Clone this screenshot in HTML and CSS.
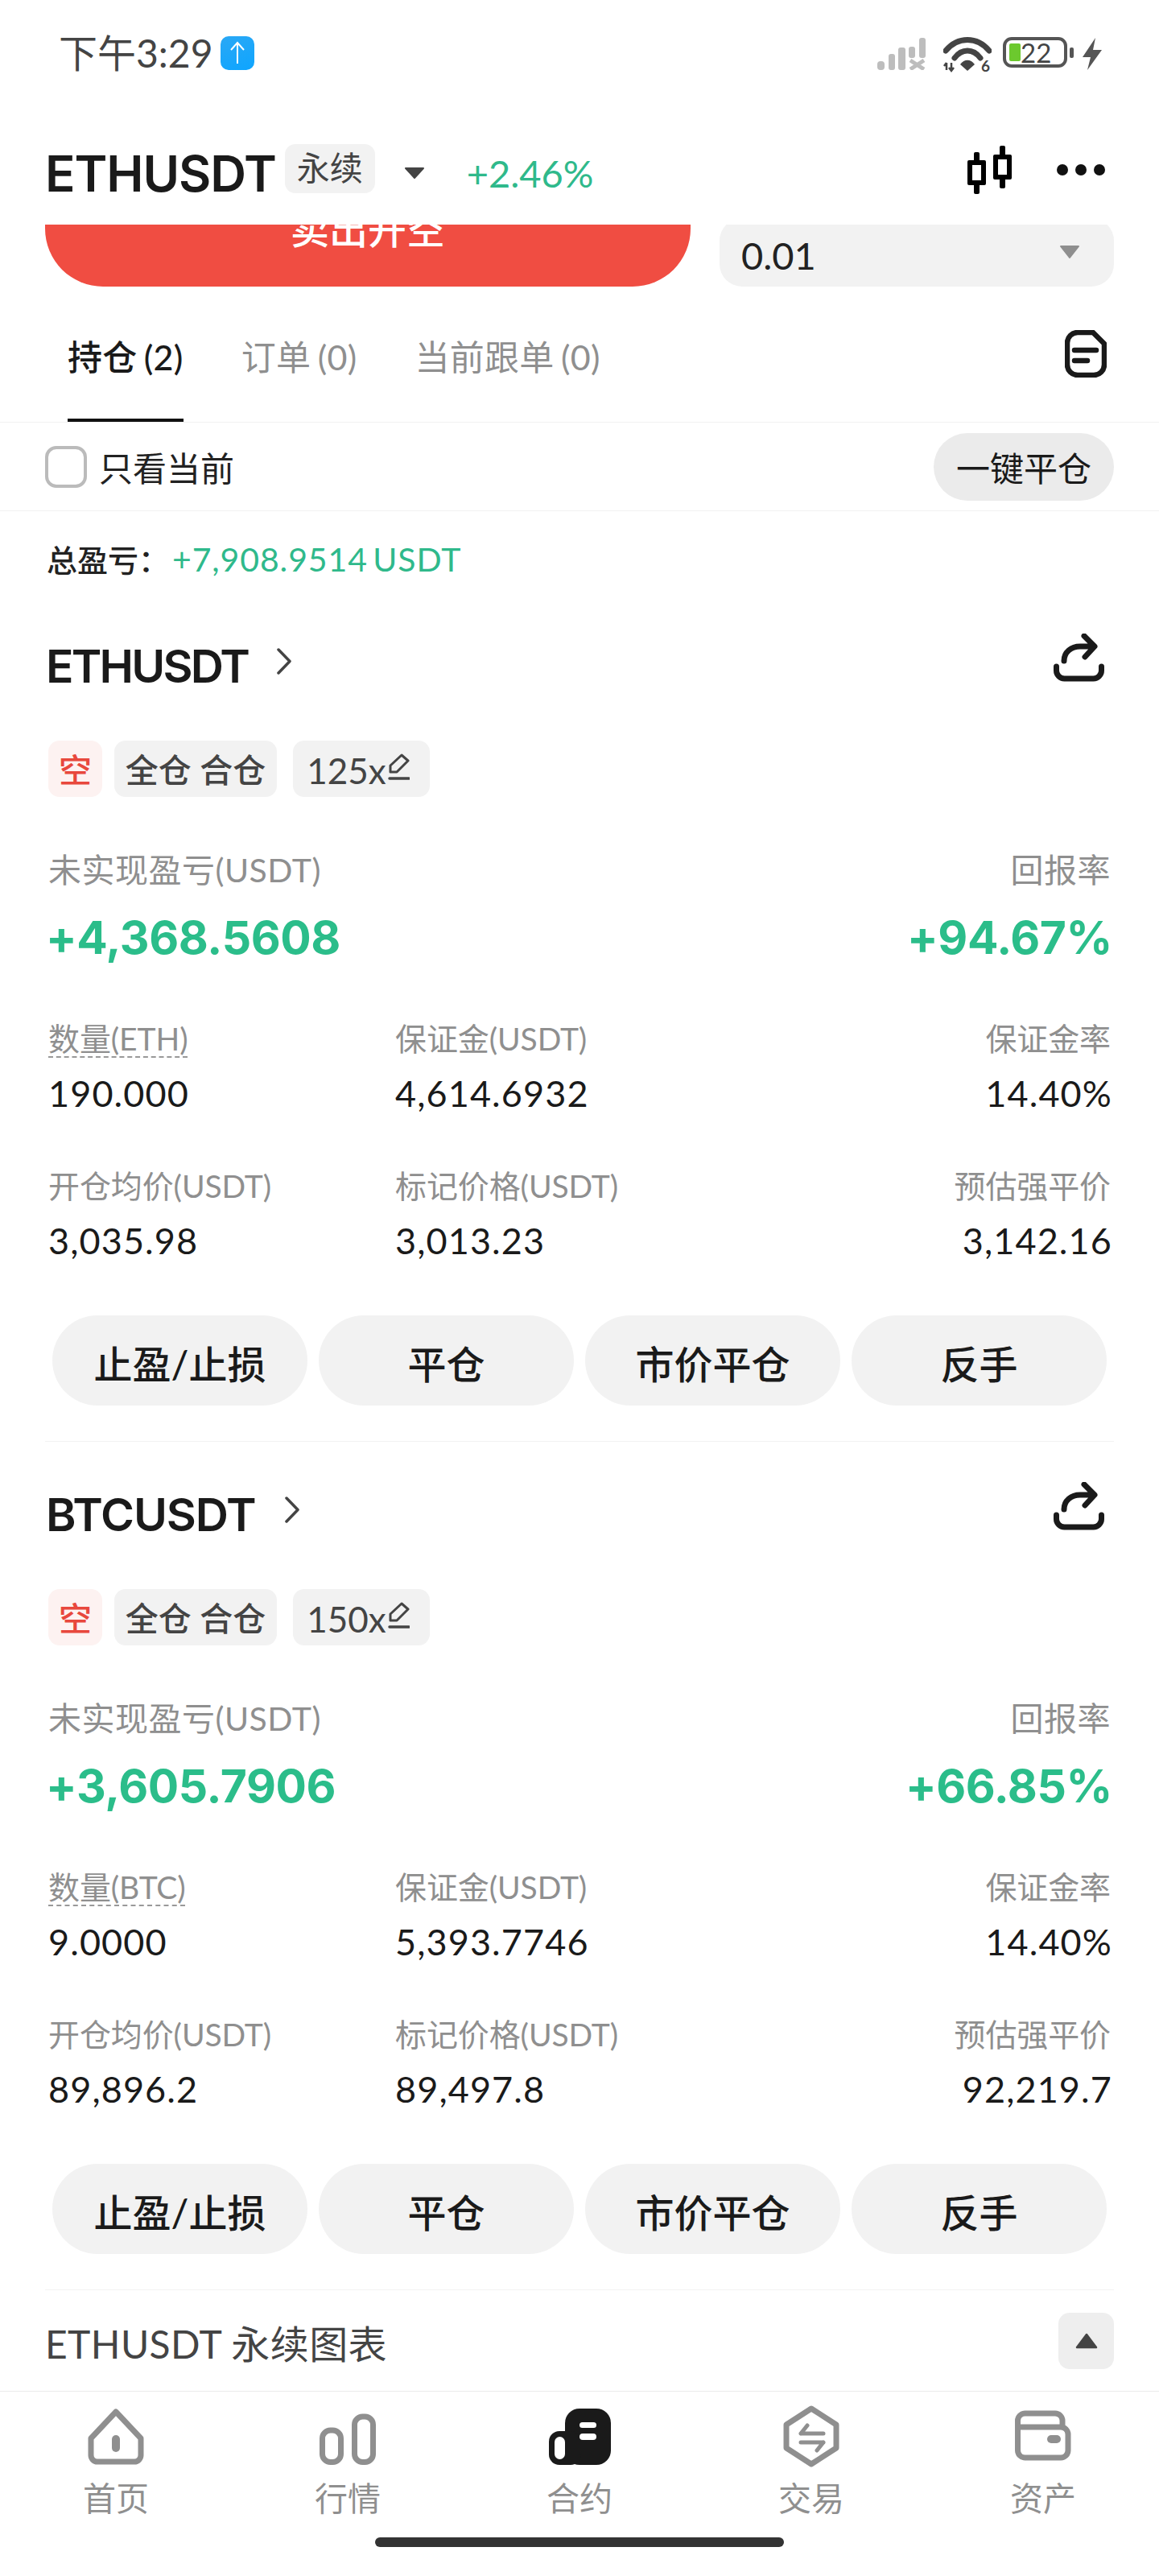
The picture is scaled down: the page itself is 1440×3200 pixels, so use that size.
FILE: index.html
```html
<!DOCTYPE html>
<html lang="zh-CN">
<head>
<meta charset="utf-8">
<title>ETHUSDT 永续</title>
<link rel="stylesheet" href="styles.css">
</head>
<body>
<div class="app">
  <div class="status">
    <div class="status-left">
      <span class="time">下午3:29</span>
      <span class="up-badge"><svg width="18" height="30" viewBox="0 0 18 30"><path d="M9 28V2M1 11L9 2l8 9" fill="none" stroke="#fff" stroke-width="2"/></svg></span>
    </div>
    <div class="status-right">
      <svg class="ic-signal" width="60" height="40" viewBox="0 0 60 40" fill="#bdbdbd">
        <rect x="0" y="29" width="9" height="11" rx="4"/><rect x="14" y="20" width="8" height="20" rx="3"/><rect x="26" y="12" width="9" height="28" rx="3"/><rect x="39" y="11" width="8" height="14" rx="3"/><rect x="52" y="0" width="8" height="25" rx="3"/>
        <path d="M41 28L58 39M58 28L41 39" stroke="#bdbdbd" stroke-width="5" fill="none"/>
      </svg>
      <svg class="ic-wifi" width="60" height="48" viewBox="0 0 60 48">
        <path d="M3 18C18 0 42 0 57 18" fill="none" stroke="#444" stroke-width="7" stroke-linecap="round"/>
        <path d="M14 27C23 15 37 15 46 27" fill="none" stroke="#444" stroke-width="7" stroke-linecap="round"/>
        <path d="M21 35C26 28 34 28 39 35L30 43Z" fill="#444"/>
        <path d="M4 33V42M10 43V33M1 37L4 33M7 39L10 43L13 39" fill="none" stroke="#444" stroke-width="2.5"/>
        <text x="47" y="44" class="wifi-six">6</text>
      </svg>
      <div class="battery"><span class="battery-fill"></span><span class="battery-num">22</span></div>
      <span class="battery-nub"></span>
      <svg class="ic-bolt" width="24" height="40" viewBox="0 0 24 40"><path d="M16 0L0 24H10L6 40L24 15H13Z" fill="#555"/></svg>
    </div>
  </div>

  <header class="topbar">
    <h1 class="pair">ETHUSDT</h1>
    <span class="perp-tag">永续</span>
    <svg class="caret" width="26" height="16" viewBox="0 0 26 16"><path d="M2 2H24L13 14Z" fill="#444" stroke="#444" stroke-width="2" stroke-linejoin="round"/></svg>
    <span class="change">+2.46%</span>
    <div class="top-actions">
      <svg width="55" height="60" viewBox="0 0 55 60">
        <rect x="8" y="8" width="7" height="52" rx="2"/><rect x="0" y="18" width="23" height="31" rx="2"/><rect x="6" y="24" width="11" height="19" fill="#fff"/>
        <rect x="40" y="0" width="7" height="53" rx="2"/><rect x="32" y="11" width="23" height="31" rx="2"/><rect x="38" y="17" width="11" height="19" fill="#fff"/>
      </svg>
      <span class="dots"><i></i><i></i><i></i></span>
    </div>
  </header>

  <div class="order-strip">
    <button class="sell-btn"><span>卖出开空</span></button>
    <div class="qty"><span>0.01</span>
      <svg width="26" height="18" viewBox="0 0 26 18"><path d="M2 2H24L13 16Z" fill="#8f8f8f" stroke="#8f8f8f" stroke-width="2" stroke-linejoin="round"/></svg>
    </div>
  </div>

  <nav class="tabs">
    <a class="tab active">持仓 (2)</a>
    <a class="tab">订单 (0)</a>
    <a class="tab">当前跟单 (0)</a>
    <svg class="doc" width="52" height="59" viewBox="0 0 52 59" fill="none" stroke="#1a1a1a" stroke-width="6.5" stroke-linecap="round" stroke-linejoin="round">
      <path d="M16 3H35L49 17V43A13 13 0 0 1 36 56H16A13 13 0 0 1 3 43V16A13 13 0 0 1 16 3Z"/>
      <path d="M12 25H39M12 38H28"/>
    </svg>
  </nav>

  <div class="filter-row">
    <label class="check"><span class="box"></span>只看当前</label>
    <button class="close-all">一键平仓</button>
  </div>

  <div class="total"><span class="total-label">总盈亏：</span><span class="total-value">+7,908.9514 USDT</span></div>

  <section class="card">
    <div class="card-head">
      <h2 class="sym sym-eth">ETHUSDT</h2>
      <svg class="chev" width="18" height="33" viewBox="0 0 18 33"><path d="M2 2L16 16.5L2 31" fill="none" stroke="#444" stroke-width="3.5" stroke-linecap="round" stroke-linejoin="round"/></svg>
      <svg class="share" width="63" height="60" viewBox="0 0 63 60" fill="none" stroke="#1a1a1a" stroke-width="7" stroke-linecap="round" stroke-linejoin="round">
        <path d="M3.5 41V46A10 10 0 0 0 13.5 56H49.5A10 10 0 0 0 59.5 46V41"/>
        <path d="M13 34C13 23 22 16 33 16H49M38 3L51 16L39 29"/>
      </svg>
    </div>
    <div class="tags">
      <span class="tag tag-short">空</span>
      <span class="tag tag-mode">全仓 合仓</span>
      <span class="tag tag-lev">125x<svg width="27" height="34" viewBox="0 0 27 34" fill="none" stroke="#444" stroke-width="3" stroke-linejoin="round"><path d="M17 2L25 9L11 23H3V15Z"/><path d="M2 31H26" stroke-width="3.5" stroke-linecap="round"/></svg></span>
    </div>
    <div class="pnl-labels"><span>未实现盈亏(USDT)</span><span>回报率</span></div>
    <div class="pnl-values"><span>+4,368.5608</span><span>+94.67%</span></div>
    <div class="stats">
      <div class="stat-label"><span class="dashed">数量(ETH)</span></div><div class="stat-label">保证金(USDT)</div><div class="stat-label r">保证金率</div>
      <div class="stat-value">190.000</div><div class="stat-value">4,614.6932</div><div class="stat-value r">14.40%</div>
      <div class="stat-label gap">开仓均价(USDT)</div><div class="stat-label gap">标记价格(USDT)</div><div class="stat-label gap r">预估强平价</div>
      <div class="stat-value">3,035.98</div><div class="stat-value">3,013.23</div><div class="stat-value r">3,142.16</div>
    </div>
    <div class="actions">
      <button>止盈/止损</button><button>平仓</button><button>市价平仓</button><button>反手</button>
    </div>
  </section>

  <section class="card">
    <div class="card-head">
      <h2 class="sym">BTCUSDT</h2>
      <svg class="chev" width="18" height="33" viewBox="0 0 18 33"><path d="M2 2L16 16.5L2 31" fill="none" stroke="#444" stroke-width="3.5" stroke-linecap="round" stroke-linejoin="round"/></svg>
      <svg class="share" width="63" height="60" viewBox="0 0 63 60" fill="none" stroke="#1a1a1a" stroke-width="7" stroke-linecap="round" stroke-linejoin="round">
        <path d="M3.5 41V46A10 10 0 0 0 13.5 56H49.5A10 10 0 0 0 59.5 46V41"/>
        <path d="M13 34C13 23 22 16 33 16H49M38 3L51 16L39 29"/>
      </svg>
    </div>
    <div class="tags">
      <span class="tag tag-short">空</span>
      <span class="tag tag-mode">全仓 合仓</span>
      <span class="tag tag-lev">150x<svg width="27" height="34" viewBox="0 0 27 34" fill="none" stroke="#444" stroke-width="3" stroke-linejoin="round"><path d="M17 2L25 9L11 23H3V15Z"/><path d="M2 31H26" stroke-width="3.5" stroke-linecap="round"/></svg></span>
    </div>
    <div class="pnl-labels"><span>未实现盈亏(USDT)</span><span>回报率</span></div>
    <div class="pnl-values"><span>+3,605.7906</span><span>+66.85%</span></div>
    <div class="stats">
      <div class="stat-label"><span class="dashed">数量(BTC)</span></div><div class="stat-label">保证金(USDT)</div><div class="stat-label r">保证金率</div>
      <div class="stat-value">9.0000</div><div class="stat-value">5,393.7746</div><div class="stat-value r">14.40%</div>
      <div class="stat-label gap">开仓均价(USDT)</div><div class="stat-label gap">标记价格(USDT)</div><div class="stat-label gap r">预估强平价</div>
      <div class="stat-value">89,896.2</div><div class="stat-value">89,497.8</div><div class="stat-value r">92,219.7</div>
    </div>
    <div class="actions">
      <button>止盈/止损</button><button>平仓</button><button>市价平仓</button><button>反手</button>
    </div>
  </section>

  <div class="chart-row">
    <span class="chart-title">ETHUSDT 永续图表</span>
    <button class="chart-toggle"><svg width="28" height="20" viewBox="0 0 28 20"><path d="M14 2L26 18H2Z" fill="#444" stroke="#444" stroke-width="2.5" stroke-linejoin="round"/></svg></button>
  </div>

  <footer class="bottom-nav">
    <a class="nav-item">
      <span class="nav-icon"><svg width="70" height="70" viewBox="0 0 70 70" fill="none" stroke="#8f8f8f" stroke-width="7" stroke-linejoin="round"><path d="M35 4L66 37V58A8 8 0 0 1 58 66H12A8 8 0 0 1 4 58V37Z"/><rect x="30" y="33" width="10" height="21" rx="5" fill="#8f8f8f" stroke="none"/></svg></span>
      首页
    </a>
    <a class="nav-item">
      <span class="nav-icon"><svg width="70" height="70" viewBox="0 0 70 70" fill="none" stroke="#8f8f8f" stroke-width="7"><rect x="3.5" y="27" width="23" height="39.500" rx="10"/><rect x="43.500" y="10" width="23" height="56.500" rx="10"/></svg></span>
      行情
    </a>
    <a class="nav-item">
      <span class="nav-icon"><svg width="77" height="70" viewBox="0 0 77 70"><rect x="20" y="0" width="57" height="70" rx="18" fill="#1a1a1a"/><rect x="0" y="28" width="40" height="42" rx="13" fill="#1a1a1a"/><rect x="7" y="35" width="13" height="28" rx="6.5" fill="#fff"/><rect x="38" y="17" width="21" height="7" rx="3.500" fill="#fff"/><rect x="38" y="31" width="21" height="8" rx="4" fill="#fff"/></svg></span>
      合约
    </a>
    <a class="nav-item">
      <span class="nav-icon"><svg width="70" height="77" viewBox="0 0 70 77" fill="none" stroke="#8f8f8f" stroke-width="7" stroke-linejoin="round"><path d="M35 4L66 24V53L35 73L4 53V24Z"/><path d="M22 35H50M22 35L30 25M50 46H22M50 46L42 56" stroke-width="5" stroke-linecap="round"/></svg></span>
      交易
    </a>
    <a class="nav-item">
      <span class="nav-icon"><svg width="70" height="66" viewBox="0 0 70 66" fill="none" stroke="#8f8f8f" stroke-width="7" stroke-linejoin="round"><path d="M3.500 15V50A9 9 0 0 0 12.500 59H57A9 9 0 0 0 66 50V30A9 9 0 0 0 57 21H3.500"/><path d="M3.500 20V13A9 9 0 0 1 12.500 4H50A9 9 0 0 1 59 13V21"/><rect x="40" y="31" width="17" height="10" rx="5" fill="#8f8f8f" stroke="none"/></svg></span>
      资产
    </a>
  </footer>
  <div class="home-indicator"></div>
</div>
</body>
</html>
```
FILE: styles.css
```css
* { box-sizing: border-box; }
html, body { margin: 0; padding: 0; background: #fff; }
body { font-family: "Lato", "Noto Sans CJK SC", sans-serif; color: #1a1a1a; }
button { font: inherit; border: 0; margin: 0; padding: 0; color: inherit; }
h1, h2 { margin: 0; }
.app { width: 1440px; height: 3200px; overflow: hidden; display: flex; flex-direction: column; }

/* status bar */
.status { height: 150px; flex: none; display: flex; justify-content: space-between; align-items: flex-start; padding: 45px 71px 0 73px; }
.status-left { display: flex; align-items: center; gap: 9px; }
.time { font-size: 48px; line-height: 42px; color: #444; }
.up-badge { width: 42px; height: 42px; border-radius: 10px; background: linear-gradient(160deg, #2aa8f5, #0ea5ff); display: flex; align-items: center; justify-content: center; }
.status-right { display: flex; align-items: flex-start; }
.ic-signal { margin: 2px 22px 0 0; }
.wifi-six { font-size: 19px; font-weight: 700; fill: #444; font-family: "Lato", sans-serif; }
.battery { position: relative; width: 80px; height: 38px; margin: 1px 0 0 14px; border: 4px solid #555; border-radius: 11px; overflow: hidden; font-size: 33px; line-height: 30px; color: #444; }
.battery-fill { position: absolute; left: 4px; top: 4px; bottom: 4px; width: 14px; background: #6cc92e; border-radius: 2px; }
.battery-num { position: absolute; left: 18px; top: 0; }
.battery-nub { width: 5px; height: 13px; margin: 14px 0 0 3px; background: #555; border-radius: 2px; }
.ic-bolt { margin: 2px 0 0 11px; }

/* top bar */
.topbar { height: 129px; flex: none; display: flex; align-items: center; padding: 0 68px 0 56px; }
.pair { font-family: "Inter", sans-serif; font-size: 62px; font-weight: 600; line-height: 70px; letter-spacing: -1.100px; color: #1a1a1a; margin-top: 3px; }
.perp-tag { margin-left: 11px; width: 112px; height: 61px; background: #f2f2f2; border-radius: 13px; font-size: 41px; line-height: 59px; text-align: center; color: #444; align-self: flex-start; margin-top: 29px; }
.caret { margin-left: 36px; }
.change { margin-left: 52px; font-size: 47px; line-height: 52px; color: #2fb98b; }
.top-actions { margin-left: auto; display: flex; align-items: center; gap: 56px; margin-top: -8px; transform: translateX(1px); }
.dots { display: flex; gap: 9px; }
.dots i { width: 14px; height: 14px; border-radius: 50%; background: #111; }

/* clipped order form */
.order-strip { height: 77px; flex: none; overflow: hidden; display: flex; align-items: flex-end; justify-content: space-between; padding: 0 56px; }
.sell-btn { width: 802px; height: 120px; flex: none; background: #f04d42; color: #fff; border-radius: 0 0 72px 72px; font-size: 48px; font-weight: 500; display: flex; justify-content: center; padding-top: 19px; line-height: 60px; }
.qty { width: 490px; height: 85px; flex: none; background: #f2f2f2; border-radius: 28px; display: flex; justify-content: space-between; align-items: center; padding: 6px 42px 0 27px; font-size: 47px; color: #222; }
.qty svg { margin-top: -8px; }

/* tabs */
.tabs { height: 169px; flex: none; display: flex; padding: 0 65px 0 84px; gap: 72px; border-bottom: 1px solid #f2f2f2; }
.tab { height: 168px; padding-top: 58px; font-size: 43px; line-height: 60px; color: #8f8f8f; border-bottom: 4px solid transparent; word-spacing: -3px; letter-spacing: 0.300px; }
.tab.active { color: #1a1a1a; border-bottom-color: #111; font-weight: 500; }
.doc { margin: 54px 0 0 auto; }

/* filter */
.filter-row { height: 110px; flex: none; display: flex; justify-content: space-between; align-items: center; padding: 0 56px; border-bottom: 1px solid #f2f2f2; }
.check { display: flex; align-items: center; gap: 15px; font-size: 42px; color: #222; }
.box { width: 52px; height: 52px; border: 4px solid #bbb; border-radius: 14px; }
.close-all { width: 224px; height: 84px; border-radius: 42px; background: #ebebeb; font-size: 42px; color: #1a1a1a; }

/* total */
.total { height: 102px; flex: none; padding: 35px 0 0 58px; font-size: 38px; line-height: 50px; display: flex; }
.total-label { width: 156px; font-weight: 500; color: #222; }
.total-value { color: #2fb98b; font-size: 41px; letter-spacing: 0.900px; word-spacing: -5px; }

/* position card */
.card { height: 1054px; flex: none; padding: 61px 60px 0; margin: 0; position: relative; }
.card::after { content: ""; position: absolute; left: 56px; right: 56px; bottom: 0; height: 1px; background: #f2f2f2; }
.card-head { height: 60px; display: flex; align-items: center; }
.sym { font-family: "Inter", sans-serif; font-size: 57px; font-weight: 600; line-height: 60px; letter-spacing: -1.100px; color: #1a1a1a; margin-left: -3px; }
.sym-eth { letter-spacing: -2.800px; }
.chev { margin: -14px 0 0 36px; }
.share { margin: -22px 8px 0 auto; }
.tags { display: flex; gap: 15px; margin-top: 62px; height: 70px; }
.tag { height: 70px; border-radius: 14px; background: #f2f2f2; font-size: 41px; font-weight: 500; line-height: 70px; color: #444; display: flex; align-items: center; justify-content: center; padding-top: 4px; }
.tag-short { width: 67px; background: #fdf2f1; color: #e8483d; }
.tag-mode { width: 202px; margin-right: 5px; }
.tag-lev { width: 170px; gap: 2px; font-size: 44px; font-weight: 400; padding-right: 8px; }
.tag-lev svg { margin-top: -8px; }
.pnl-labels { display: flex; justify-content: space-between; margin-top: 66px; font-size: 41px; line-height: 50px; color: #8f8f8f; letter-spacing: 0.500px; }
.pnl-values { display: flex; justify-content: space-between; margin-top: 27px; font-family: "Inter", sans-serif; font-size: 57px; font-weight: 700; line-height: 64px; color: #2bbd8a; letter-spacing: -0.400px; }
.pnl-values span:first-child { margin-left: -3px; }
.pnl-values span:last-child { margin-right: -2px; }
.stats { display: grid; grid-template-columns: 431px 1fr auto; margin-top: 71px; }
.stat-label { font-size: 39px; line-height: 44px; color: #8f8f8f; letter-spacing: -0.100px; }
.stat-label.gap { margin-top: 71px; }
.stat-value { font-size: 45px; line-height: 44px; margin-top: 24px; color: #1a1a1a; letter-spacing: 1.100px; }
.r { text-align: right; }
.stat-value.r { margin-right: -2px; }
.dashed { text-decoration: underline dashed #999 2px; text-underline-offset: 7px; text-decoration-skip-ink: none; }
.actions { display: grid; grid-template-columns: repeat(4, 317px); gap: 14px; margin: 71px 5px 0; }
.actions button { height: 112px; border-radius: 56px; background: #f2f2f2; font-size: 48px; font-weight: 500; color: #1a1a1a; padding-top: 4px; }

/* chart row */
.chart-row { height: 126px; flex: none; display: flex; align-items: center; justify-content: space-between; padding: 0 56px 0 56px; border-bottom: 1px solid #ebebeb; }
.chart-title { font-size: 48px; color: #444; margin-top: 3px; letter-spacing: 0.400px; }
.chart-toggle { width: 69px; height: 70px; border-radius: 14px; background: #eee; display: flex; align-items: center; justify-content: center; }

/* bottom nav */
.bottom-nav { flex: none; display: grid; grid-template-columns: repeat(5, 288px); padding-top: 17px; }
.nav-item { display: flex; flex-direction: column; align-items: center; font-size: 41px; line-height: 50px; color: #8f8f8f; }
.nav-icon { height: 77px; display: flex; align-items: center; justify-content: center; margin-bottom: 14px; }
.home-indicator { width: 508px; height: 12px; flex: none; margin: 23px auto 0; background: #333; border-radius: 6px; }
```
